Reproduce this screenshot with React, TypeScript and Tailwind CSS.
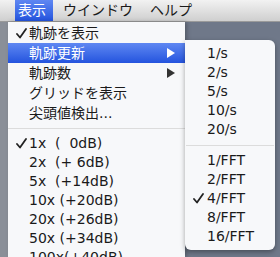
import React from "react";

const font = { fontFamily: '"DejaVu Sans", "Noto Sans CJK JP", sans-serif' };

function Check({ white }: { white?: boolean }) {
  return (
    <svg width="11" height="11" viewBox="0 0 11 11" className="shrink-0">
      <path d="M1 6 L4 9.5 L10 1" fill="none" stroke={white ? "#fff" : "#222"} strokeWidth="1.8" strokeLinecap="round" strokeLinejoin="round" />
    </svg>
  );
}

function Arrow({ white }: { white?: boolean }) {
  return (
    <svg width="8" height="10" viewBox="0 0 8 10">
      <polygon points="0,0 8,5 0,10" fill={white ? "#fff" : "#333"} />
    </svg>
  );
}

type Item = { label: string; checked?: boolean; sub?: boolean; active?: boolean } | "sep";

const mainItems: Item[] = [
  { label: "軌跡を表示", checked: true },
  { label: "軌跡更新", sub: true, active: true },
  { label: "軌跡数", sub: true },
  { label: "グリッドを表示" },
  { label: "尖頭値検出..." },
  "sep",
  { label: "1x\u00a0 (\u00a0\u00a00dB)", checked: true },
  { label: "2x\u00a0 (+ 6dB)" },
  { label: "5x\u00a0 (+14dB)" },
  { label: "10x (+20dB)" },
  { label: "20x (+26dB)" },
  { label: "50x (+34dB)" },
  { label: "100x(+40dB)" },
];

const subItems: Item[] = [
  { label: "1/s" },
  { label: "2/s" },
  { label: "5/s" },
  { label: "10/s" },
  { label: "20/s" },
  "sep",
  { label: "1/FFT" },
  { label: "2/FFT" },
  { label: "4/FFT", checked: true },
  { label: "8/FFT" },
  { label: "16/FFT" },
];

export default function App() {
  return (
    <div className="w-[280px] h-[257px] overflow-hidden bg-[#6f7889] flex flex-col text-[14px] text-[#1a1a1a]" style={font}>
      {/* menu bar */}
      <div className="h-[22px] shrink-0 flex items-stretch bg-gradient-to-b from-[#f2f2f2] to-[#cfcfcf] border-b border-[#9a9a9a] pl-[15px]">
        <div className="px-[3px] w-[38px] flex items-center bg-gradient-to-b from-[#5f87f2] to-[#2453de] text-white">表示</div>
        <div className="pl-[10px] flex items-center">ウインドウ</div>
        <div className="pl-[17px] flex items-center">ヘルプ</div>
      </div>

      <div className="flex flex-1 min-h-0">
        <div className="w-[8px] shrink-0 bg-[#8a8f98]" />
        {/* dropdown */}
        <div className="w-[177px] shrink-0 bg-[#f7f8fa] pt-[1px] shadow-[2px_0_4px_rgba(0,0,0,0.25)] z-10">
          {mainItems.map((it, i) =>
            it === "sep" ? (
              <div key={i} className="h-[11px] flex items-center">
                <div className="h-px w-full bg-[#dcdcdc]" />
              </div>
            ) : (
              <div
                key={i}
                className={
                  "flex items-center pl-[8px] pr-[10px] " +
                  (i < 5 ? "h-[20px] " : "h-[19px] ") +
                  (it.active ? "bg-gradient-to-b from-[#5f87f2] to-[#2453de] text-white" : "")
                }
              >
                <div className="w-[13px] shrink-0 flex items-center">{it.checked && <Check white={it.active} />}</div>
                <div className="flex-1 whitespace-pre">{it.label}</div>
                {it.sub && <Arrow white={it.active} />}
              </div>
            )
          )}
        </div>
        {/* submenu */}
        <div className="flex-1 pt-[18px] pr-[5px] z-20">
          <div className="bg-[#f7f8fa] rounded-tr-[6px] rounded-b-[6px] pt-[4px] pb-[4px] shadow-[0_2px_5px_rgba(0,0,0,0.35)]">
            {subItems.map((it, i) =>
              it === "sep" ? (
                <div key={i} className="h-[12px] flex items-center px-[1px]">
                  <div className="h-px w-full bg-[#dcdcdc]" />
                </div>
              ) : (
                <div key={i} className="h-[19px] flex items-center pl-[8px]">
                  <div className="w-[14px] shrink-0 flex items-center">{it.checked && <Check />}</div>
                  <div>{it.label}</div>
                </div>
              )
            )}
          </div>
        </div>
      </div>
    </div>
  );
}
